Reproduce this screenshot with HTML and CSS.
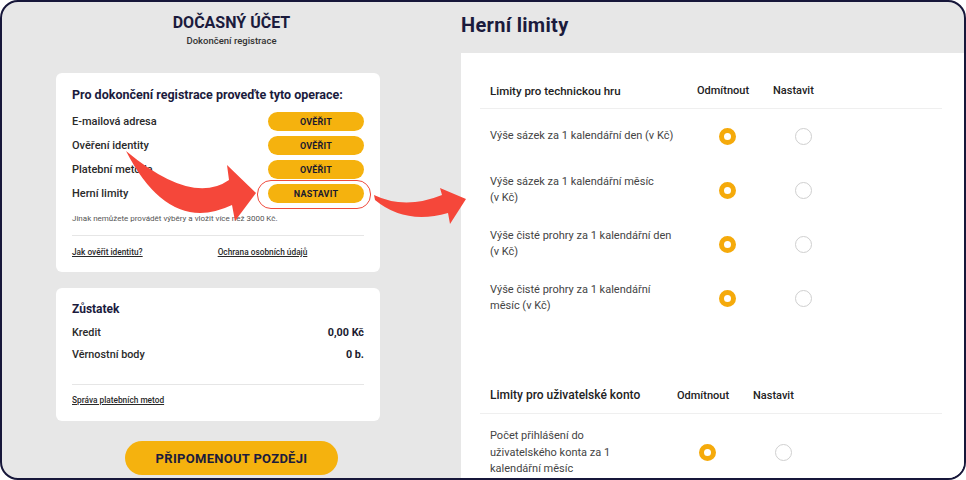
FILE: index.html
```html
<!DOCTYPE html>
<html lang="cs">
<head>
<meta charset="utf-8">
<title>Dočasný účet – Herní limity</title>
<link rel="stylesheet" href="styles.css">
</head>
<body>
<div class="frame">
  <div class="left">
    <h1 class="title">DOČASNÝ ÚČET</h1>
    <p class="subtitle">Dokončení registrace</p>

    <section class="card steps">
      <h2 class="card-title steps-title">Pro dokončení registrace proveďte tyto operace:</h2>
      <ul class="step-list">
        <li class="step"><span class="step-label">E-mailová adresa</span><span class="pill">OVĚŘIT</span></li>
        <li class="step"><span class="step-label">Ověření identity</span><span class="pill">OVĚŘIT</span></li>
        <li class="step"><span class="step-label">Platební metoda</span><span class="pill">OVĚŘIT</span></li>
        <li class="step"><span class="step-label">Herní limity</span><span class="pill pill-marked">NASTAVIT</span></li>
      </ul>
      <p class="note">Jinak nemůžete provádět výběry a vložit více než 3000 Kč.</p>
      <div class="divider"></div>
      <div class="links">
        <span class="link">Jak ověřit identitu?</span>
        <span class="link link-second">Ochrana osobních údajů</span>
      </div>
    </section>

    <section class="card balance">
      <h2 class="card-title">Zůstatek</h2>
      <div class="bal-row bal-first"><span>Kredit</span><span class="bal-value">0,00 Kč</span></div>
      <div class="bal-row"><span>Věrnostní body</span><span class="bal-value">0 b.</span></div>
      <div class="divider divider-balance"></div>
      <span class="link">Správa platebních metod</span>
    </section>

    <div class="remind-wrap"><span class="remind">PŘIPOMENOUT POZDĚJI</span></div>
  </div>

  <div class="right">
    <h1 class="limits-title">Herní limity</h1>
    <div class="limits-card">
      <div class="limits-section sec-game">
        <div class="limits-head">
          <span class="head-main">Limity pro technickou hru</span><span>Odmítnout</span><span>Nastavit</span>
        </div>
        <div class="limits-row">
          <span class="lbl">Výše sázek za 1 kalendářní den (v Kč)</span>
          <span class="cell"><span class="radio on"></span></span>
          <span class="cell"><span class="radio"></span></span>
        </div>
        <div class="limits-row">
          <span class="lbl">Výše sázek za 1 kalendářní měsíc<br>(v Kč)</span>
          <span class="cell"><span class="radio on"></span></span>
          <span class="cell"><span class="radio"></span></span>
        </div>
        <div class="limits-row">
          <span class="lbl">Výše čisté prohry za 1 kalendářní den<br>(v Kč)</span>
          <span class="cell"><span class="radio on"></span></span>
          <span class="cell"><span class="radio"></span></span>
        </div>
        <div class="limits-row">
          <span class="lbl">Výše čisté prohry za 1 kalendářní<br>měsíc (v Kč)</span>
          <span class="cell"><span class="radio on"></span></span>
          <span class="cell"><span class="radio"></span></span>
        </div>
      </div>

      <div class="limits-section sec-account">
        <div class="limits-head head-account">
          <span class="head-big">Limity pro uživatelské konto</span><span>Odmítnout</span><span>Nastavit</span>
        </div>
        <div class="limits-row row-tall">
          <span class="lbl">Počet přihlášení do<br>uživatelského konta za 1<br>kalendářní měsíc</span>
          <span class="cell"><span class="radio on"></span></span>
          <span class="cell"><span class="radio"></span></span>
        </div>
      </div>
    </div>
  </div>

  <svg class="arrows" width="966" height="480" viewBox="0 0 966 480" aria-hidden="true">
    <path d="M126,151 Q192,206 229,180 L227,165 L256,193 L235,221 L232,205 Q169,235 126,151 Z" fill="#f5473a"/>
    <path d="M374,195 Q405,210 442,195 L440,188 L466,199 L450,224 L448,213 Q405,225 375,200 Z" fill="#f5473a"/>
  </svg>
</div>
</body>
</html>
```

FILE: styles.css
```css
* { box-sizing: border-box; }

html, body {
  margin: 0;
  padding: 0;
  background: #ffffff;
}

body {
  font-family: Roboto, "Noto Sans", "DejaVu Sans", sans-serif;
  color: #2a2a2a;
}

.frame {
  position: relative;
  width: 966px;
  height: 480px;
  border: 2px solid #17173a;
  border-radius: 18px;
  background: #e7e7e7;
  overflow: hidden;
  display: grid;
  grid-template-columns: 459px 1fr;
}

/* ---------- left column ---------- */
.left {
  padding-top: 11px;
  display: flex;
  flex-direction: column;
}

.title {
  margin: 0;
  text-align: center;
  font-size: 16px;
  line-height: 19px;
  font-weight: 700;
  color: #1b1b3d;
}

.subtitle {
  margin: 3px 0 0;
  text-align: center;
  font-size: 9.5px;
  line-height: 11px;
  font-weight: 500;
  color: #333;
}

.card {
  margin-left: 54px;
  width: 324px;
  background: #fff;
  border-radius: 6px;
  padding: 0 16px;
}

.steps {
  margin-top: 27px;
  padding-top: 14px;
  padding-bottom: 15px;
}

.card-title {
  margin: 0;
  font-size: 12px;
  line-height: 16px;
  font-weight: 700;
  color: #1b1b3d;
}

.steps-title {
  font-size: 12.5px;
}

.step-list {
  list-style: none;
  margin: 9px 0 0;
  padding: 0;
  display: flex;
  flex-direction: column;
  gap: 5px;
}

.step {
  display: flex;
  align-items: center;
  justify-content: space-between;
  height: 19px;
}

.step-label {
  font-size: 11px;
  font-weight: 500;
  color: #2a2a2a;
}

.pill {
  position: relative;
  width: 96px;
  height: 19px;
  border-radius: 10px;
  background: #f5b20e;
  display: flex;
  align-items: center;
  justify-content: center;
  font-size: 9px;
  font-weight: 700;
  color: #1b1b2f;
  letter-spacing: 0.2px;
}

.pill-marked::after {
  content: "";
  position: absolute;
  top: -4px;
  bottom: -6px;
  left: -11px;
  right: -7px;
  border: 1.5px solid #ef4a3c;
  border-radius: 14px;
}

.note {
  margin: 11px 0 0;
  font-size: 8px;
  line-height: 10px;
  color: #555;
}

.divider {
  margin-top: 11px;
  height: 1px;
  background: #e6e6e6;
}

.links {
  margin-top: 11px;
  display: flex;
}

.link {
  font-size: 8.3px;
  line-height: 10px;
  font-weight: 500;
  color: #2a2a2a;
  text-decoration: underline;
}

.link-second {
  margin-left: 75px;
}

.balance {
  margin-top: 16px;
  padding-top: 13px;
  padding-bottom: 16px;
}

.bal-row {
  display: flex;
  justify-content: space-between;
  font-size: 10.8px;
  line-height: 14px;
  font-weight: 500;
  color: #2a2a2a;
  margin-top: 8px;
}

.bal-first { margin-top: 9px; }

.bal-value {
  font-weight: 700;
  color: #1b1b2f;
}

.divider-balance {
  margin-top: 22px;
  margin-bottom: 10px;
}

.balance .link { display: block; }

.remind-wrap {
  margin-top: 20px;
  display: flex;
  justify-content: center;
}

.remind {
  width: 213px;
  height: 34px;
  border-radius: 17px;
  background: #f5b20e;
  display: flex;
  align-items: center;
  justify-content: center;
  font-size: 13px;
  font-weight: 700;
  color: #1b1b3d;
  letter-spacing: 0.3px;
}

/* ---------- right column ---------- */
.right {
  padding-top: 11px;
  display: flex;
  flex-direction: column;
  min-height: 0;
}

.limits-title {
  margin: 0;
  font-size: 20px;
  line-height: 24px;
  font-weight: 700;
  color: #1b1b3d;
  letter-spacing: 0.3px;
}

.limits-card {
  margin-top: 16px;
  flex: 1;
  background: #fff;
  padding: 20px 22px 0 19px;
}

.limits-head,
.limits-row {
  display: grid;
  grid-template-columns: 207px 76px 1fr;
  align-items: center;
  padding-left: 10px;
  border-bottom: 1px solid #efefef;
}

.limits-head {
  height: 36px;
  font-size: 11px;
  font-weight: 500;
  color: #222;
}

.head-main {
  font-size: 11.5px;
}

.limits-row {
  height: 54px;
  border-bottom: none;
  font-size: 11px;
  line-height: 16px;
  color: #444;
}

.lbl { white-space: nowrap; }

.cell {
  padding-left: 22px;
  display: flex;
}

.radio {
  width: 17px;
  height: 17px;
  border-radius: 50%;
  border: 1px solid #cfcfcf;
  background: #fff;
}

.radio.on {
  border: 5px solid #f5aa0b;
}

.sec-account {
  margin-top: 52px;
}

.head-account,
.sec-account .limits-row {
  grid-template-columns: 187px 76px 1fr;
}

.head-account {
  height: 37px;
}

.head-big {
  font-size: 12px;
}

.row-tall {
  height: auto;
  padding-top: 14px;
  line-height: 16.5px;
}

.arrows {
  position: absolute;
  left: -2px;
  top: -2px;
  pointer-events: none;
}
```
